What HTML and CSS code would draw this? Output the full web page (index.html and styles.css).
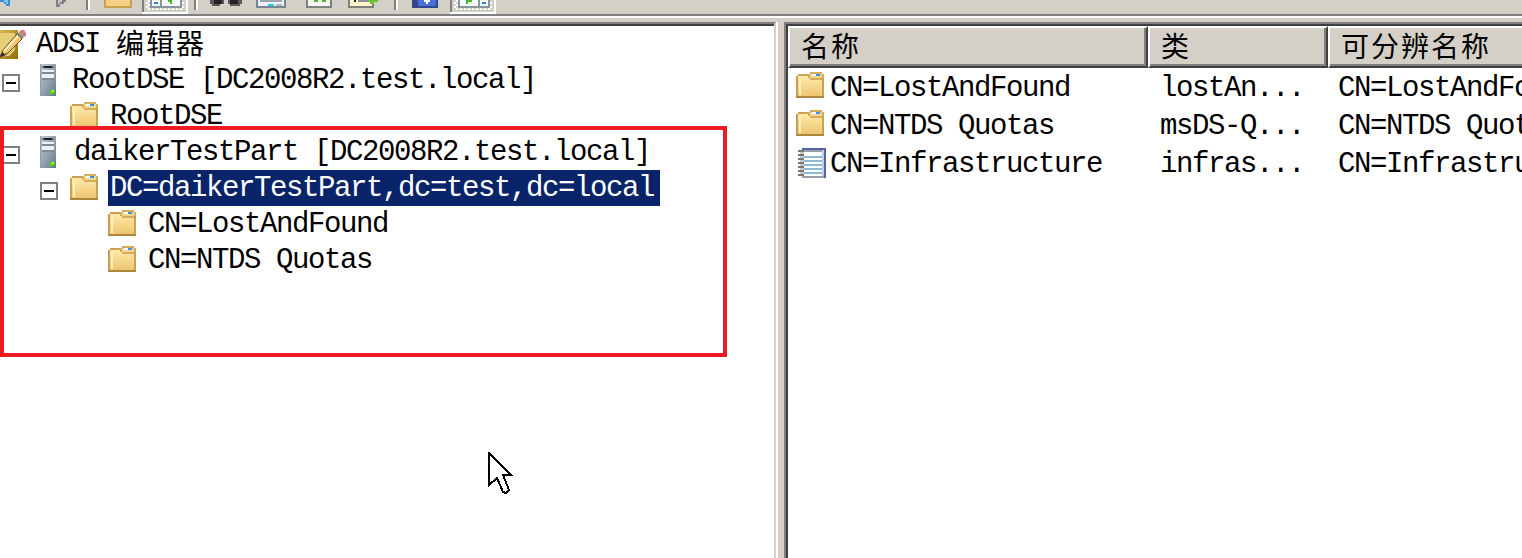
FILE: index.html
```html
<!DOCTYPE html>
<html lang="zh-CN">
<head>
<meta charset="utf-8">
<title>ADSI 编辑器</title>
<link rel="stylesheet" href="styles.css">
</head>
<body>
<svg class="defs" width="0" height="0" aria-hidden="true">
  <defs>
    <linearGradient id="gf" x1="0" y1="0" x2="0" y2="1"><stop offset="0" stop-color="#ffeaa8"/><stop offset="1" stop-color="#eec572"/></linearGradient>
    <linearGradient id="gs" x1="0" y1="0" x2="1" y2="1"><stop offset="0" stop-color="#c3ced6"/><stop offset="1" stop-color="#687987"/></linearGradient>
    <linearGradient id="gb" x1="0" y1="0" x2="1" y2="1"><stop offset="0" stop-color="#d8b758"/><stop offset="1" stop-color="#906a00"/></linearGradient>
    <pattern id="dots" width="4" height="4" patternUnits="userSpaceOnUse"><path d="M0 0H4V4H0z" fill="#d4d0c8"/><path d="M0 0H2V2H0zM2 2H4V4H2z" fill="#fff"/></pattern>
    <symbol id="folder" viewBox="0 0 28 26">
      <path d="M0 4H2V2H12V4H14V6H28V26H0z" fill="#c8a252"/>
      <path d="M2 4H12V6H26V24H2z" fill="url(#gf)"/>
      <path d="M4 7V23" stroke="#fff0bd" stroke-width="2"/>
      <path d="M14 0H26V2H28V6H26V8H14V6H12V2H14z" fill="#d4ac5a"/>
      <path d="M14 2H26V6H14z" fill="#f3d68d"/>
      <path d="M16 2H20V4H16z" fill="#fff"/><path d="M20 2H24V4H20z" fill="#3c92e4"/>
      <path d="M0 24H28V26H0z" fill="#ae873c"/>
    </symbol>
    <symbol id="server" viewBox="0 0 16 32">
      <path d="M0 0H16V32H0z" fill="url(#gs)"/>
      <path d="M2 2H14V4H2z" fill="#607483"/><path d="M4 2H12V4H4z" fill="#18232c"/>
      <path d="M2 6H14V8H2zM2 10H14V14H2z" fill="#edf2f4"/>
      <path d="M2 8H14V10H2zM2 14H14V16H2z" fill="#798b98"/>
      <path d="M0 0H1V32H0z" fill="#8c9ca8"/>
      <path d="M10 26H14V30H10z" fill="#39e513"/><path d="M12 26H14V28H12z" fill="#c9f01e"/>
    </symbol>
    <symbol id="minus" viewBox="0 0 18 18"><path d="M1 1H17V17H1z" fill="#fff" stroke="#808080" stroke-width="2"/><path d="M4 8H14V10H4z" fill="#000"/></symbol>
  </defs>
</svg>
<div class="window">
  <div class="toolbar">
    <svg width="520" height="14" shape-rendering="crispEdges">
      <path d="M0 0H10V6H6V4H4V2H0z" fill="#3b8fcb"/><path d="M4 0H8V4H6V2H4z" fill="#7cc6f0"/>
      <path d="M56 0H66V2H64V4H60V7H56z" fill="#808080"/><path d="M58 0H62V2H60V4H58z" fill="#c4c4c4"/>
      <path d="M86 0H88V10H86z" fill="#808080"/><path d="M88 0H90V10H88z" fill="#fff"/>
      <path d="M104 0H132V8H104z" fill="#c9a04b"/><path d="M106 0H130V6H106z" fill="#f3d083"/>
      <path d="M142 0H188V14H142z" fill="#fff"/><path d="M142 0H144V12H142z" fill="#808080"/><path d="M144 0H186V12H144z" fill="#d4d0c8"/><path d="M146 0H184V10H146z" fill="url(#dots)"/>
      <path d="M150 0H182V8H150z" fill="#8a949e"/><path d="M152 0H160V6H152zM162 0H180V6H162z" fill="#f8fbfb"/><path d="M154 2H158V4H154z" fill="#3a7ed2"/><path d="M168 0H172V4H170V2H168z" fill="#47b72c"/>
      <path d="M194 0H196V10H194z" fill="#808080"/><path d="M196 0H198V10H196z" fill="#fff"/>
      <path d="M210 0H224V4H220V6H212V4H210zM228 0H242V4H240V6H230V4H228z" fill="#5c5a57"/><path d="M214 0H222V4H214zM230 0H238V4H230z" fill="#242424"/>
      <path d="M256 0H286V8H256z" fill="#778592"/><path d="M258 0H284V6H258z" fill="#edf0f4"/><path d="M260 0H282V2H260z" fill="#9da5b4"/><path d="M268 4H274V6H268z" fill="#20c9f5"/><path d="M276 4H282V6H276z" fill="#b6bcc2"/>
      <path d="M306 0H332V8H306z" fill="#808080"/><path d="M308 0H330V6H308z" fill="#f7f7f7"/><path d="M314 0H318V2H314zM322 0H326V2H322z" fill="#47b72c"/>
      <path d="M348 0H374V8H348z" fill="#808080"/><path d="M350 0H372V6H350z" fill="#fff3c8"/><path d="M354 0H356V2H354z" fill="#222"/><path d="M358 0H368V2H358z" fill="#928b98"/><path d="M368 0H378V2H374V4H370V2H368z" fill="#67c437"/>
      <path d="M394 0H396V10H394z" fill="#808080"/><path d="M396 0H398V10H396z" fill="#fff"/>
      <path d="M412 0H438V8H412z" fill="#344889"/><path d="M418 0H436V6H418z" fill="#4a71db"/><path d="M424 0H430V2H428V4H426V2H424z" fill="#fff"/>
      <path d="M450 0H496V14H450z" fill="#fff"/><path d="M450 0H452V12H450z" fill="#808080"/><path d="M452 0H494V12H452z" fill="#d4d0c8"/><path d="M454 0H492V10H454z" fill="url(#dots)"/>
      <path d="M458 0H490V8H458z" fill="#8a949e"/><path d="M460 0H478V6H460zM480 0H488V6H480z" fill="#f8fbfb"/><path d="M482 2H486V4H482z" fill="#3a7ed2"/><path d="M466 0H472V2H468V4H466z" fill="#47b72c"/>
    </svg>
  </div>
  <div class="panes">
    <div class="tree">
      <div class="node root"><svg class="book" width="26" height="30" viewBox="0 0 26 30"><path d="M0 0H18V29H0z" fill="url(#gb)"/><path d="M0 3H15V20L9 26H0z" fill="#e6cf78"/><path d="M0 27L3 20L17 4L22 9L8 23z" fill="#f1c36a" stroke="#6b4a21"/><path d="M4 21L18 6" stroke="#fff0bf" stroke-width="2"/><path d="M0 27L2 22L6 25z" fill="#34302c"/><path d="M17 4L19 2L24 7L22 9z" fill="#6f9e86"/><path d="M19 2L21 0H24L26 3V6L24 7z" fill="#d67a86"/></svg><span class="label">ADSI </span><span class="cjk">编辑器</span></div>
      <div class="node l1"><svg width="18" height="18"><use href="#minus"/></svg><svg class="srv" width="16" height="32"><use href="#server"/></svg><span class="label">RootDSE [DC2008R2.test.local]</span></div>
      <div class="node l2"><svg class="fold" width="28" height="26"><use href="#folder"/></svg><span class="label">RootDSE</span></div>
      <div class="node l1 part"><svg width="18" height="18"><use href="#minus"/></svg><svg class="srv" width="16" height="32"><use href="#server"/></svg><span class="label">daikerTestPart [DC2008R2.test.local]</span></div>
      <div class="node l2 open"><svg width="18" height="18"><use href="#minus"/></svg><svg class="fold" width="28" height="26"><use href="#folder"/></svg><span class="label selected">DC=daikerTestPart,dc=test,dc=local</span></div>
      <div class="node l3"><svg class="fold" width="28" height="26"><use href="#folder"/></svg><span class="label">CN=LostAndFound</span></div>
      <div class="node l3"><svg class="fold" width="28" height="26"><use href="#folder"/></svg><span class="label">CN=NTDS Quotas</span></div>
    </div>
    <div class="splitter"></div>
    <div class="list">
      <div class="row head"><div class="th">名称</div><div class="th">类</div><div class="th">可分辨名称</div></div>
      <div class="rows">
        <div class="row"><div class="td name"><svg width="28" height="26"><use href="#folder"/></svg><span>CN=LostAndFound</span></div><div class="td">lostAn...</div><div class="td">CN=LostAndFo</div></div>
        <div class="row"><div class="td name"><svg width="28" height="26"><use href="#folder"/></svg><span>CN=NTDS Quotas</span></div><div class="td">msDS-Q...</div><div class="td">CN=NTDS Quot</div></div>
        <div class="row"><div class="td name"><svg class="note" width="28" height="30" shape-rendering="crispEdges"><path d="M4 0H28V30H4z" fill="#9aa0aa"/><path d="M4 0H28V2H4zM26 0H28V30H26z" fill="#5068a8"/><path d="M24 2H26V28H24z" fill="#c9cbe0"/><path d="M6 4H24V28H6z" fill="#fff"/><path d="M6 9H24M6 13H24M6 17H24M6 21H24M6 25H24" stroke="#8db9d3" stroke-width="2"/><path d="M0 3H6M0 7H6M0 11H6M0 15H6M0 19H6M0 23H6M0 27H6" stroke="#777" stroke-width="2"/><path d="M2 5H6M2 9H6M2 13H6M2 17H6M2 21H6M2 25H6" stroke="#c8c8c8" stroke-width="2"/></svg><span>CN=Infrastructure</span></div><div class="td">infras...</div><div class="td">CN=Infrastru</div></div>
      </div>
    </div>
  </div>
  <div class="highlight"></div>
  <svg class="cursor" width="26" height="44" viewBox="0 0 26 44"><path d="M1 1V33L9 26L15 40L18 41L21 38L15 23H23z" fill="#fff" stroke="#000" stroke-width="2" shape-rendering="crispEdges"/></svg>
</div>
</body>
</html>
```
FILE: styles.css
```css
* { box-sizing: border-box; }
body {
  margin: 0;
  background: #d4d0c8;
  color: #000;
  font-family: "Liberation Mono", "Noto Sans CJK SC", monospace;
  font-size: 29px;
  letter-spacing: -1.4px;
  overflow: hidden;
}
svg { display: block; flex: none; }
.defs { position: absolute; }
.window { position: relative; width: 1522px; height: 558px; overflow: hidden; display: flex; flex-direction: column; }
.toolbar { height: 16px; flex: none; border-bottom: 2px solid #808080; }
.panes { flex: 1; display: flex; border-top: 2px solid #fff; padding-top: 4px; min-height: 0; }
.tree { width: 776px; flex: none; background: #fff; border-top: 2px solid #808080; border-right: 2px solid #d4d0c8; box-shadow: inset 0 2px #404040; padding-top: 2px; }
.splitter { width: 8px; flex: none; border-left: 2px solid #fff; }
.list { flex: 1; min-width: 0; background: #fff; border-top: 2px solid #808080; border-left: 2px solid #808080; box-shadow: inset 2px 2px #404040; padding: 2px 0 0 2px; overflow: hidden; }
.node { display: flex; align-items: flex-start; height: 36px; line-height: 38px; white-space: pre; }
.node > svg { margin-top: 12px; }
.node > .book { margin-top: 4px; }
.node > .srv { margin: 2px 0 0 20px; }
.node > .fold { margin-top: 4px; }
.root .label { margin-left: 10px; }
.l1 { padding-left: 2px; }
.l1 .label { margin-left: 16px; }
.part .label { margin-left: 18px; }
.l2 { padding-left: 70px; }
.l2 .label { margin-left: 12px; }
.open { padding-left: 40px; }
.open > .fold { margin-left: 12px; }
.open .label { margin-left: 10px; }
.l3 { padding-left: 108px; }
.l3 .label { margin-left: 12px; }
.label { height: 36px; }
.label.selected { width: 552px; padding-left: 2px; background: #0a246a; color: #fff; }
.cjk, .th { font-family: "Noto Sans CJK SC", sans-serif; font-weight: 400; font-size: 28px; letter-spacing: 2px; }
.cjk { line-height: 32px; }
.row { display: grid; grid-template-columns: 360px 180px 400px; }
.th { height: 42px; line-height: 34px; padding-left: 11px; background: #d4d0c8; border: solid; border-width: 2px; border-color: #fff #404040 #404040 #fff; box-shadow: inset -2px -2px #808080; }
.rows { padding-top: 1px; }
.td { height: 38px; line-height: 40px; padding-left: 12px; white-space: pre; }
.td:last-child { padding-left: 10px; }
.name { display: flex; padding-left: 8px; }
.name svg { margin: 3px 6px 0 0; }
.name .note { margin: 3px 4px 0 2px; }
.highlight { position: absolute; left: 0; top: 126px; width: 727px; height: 231px; border: 4px solid #ed1c24; }
.cursor { position: absolute; left: 488px; top: 452px; }
```
